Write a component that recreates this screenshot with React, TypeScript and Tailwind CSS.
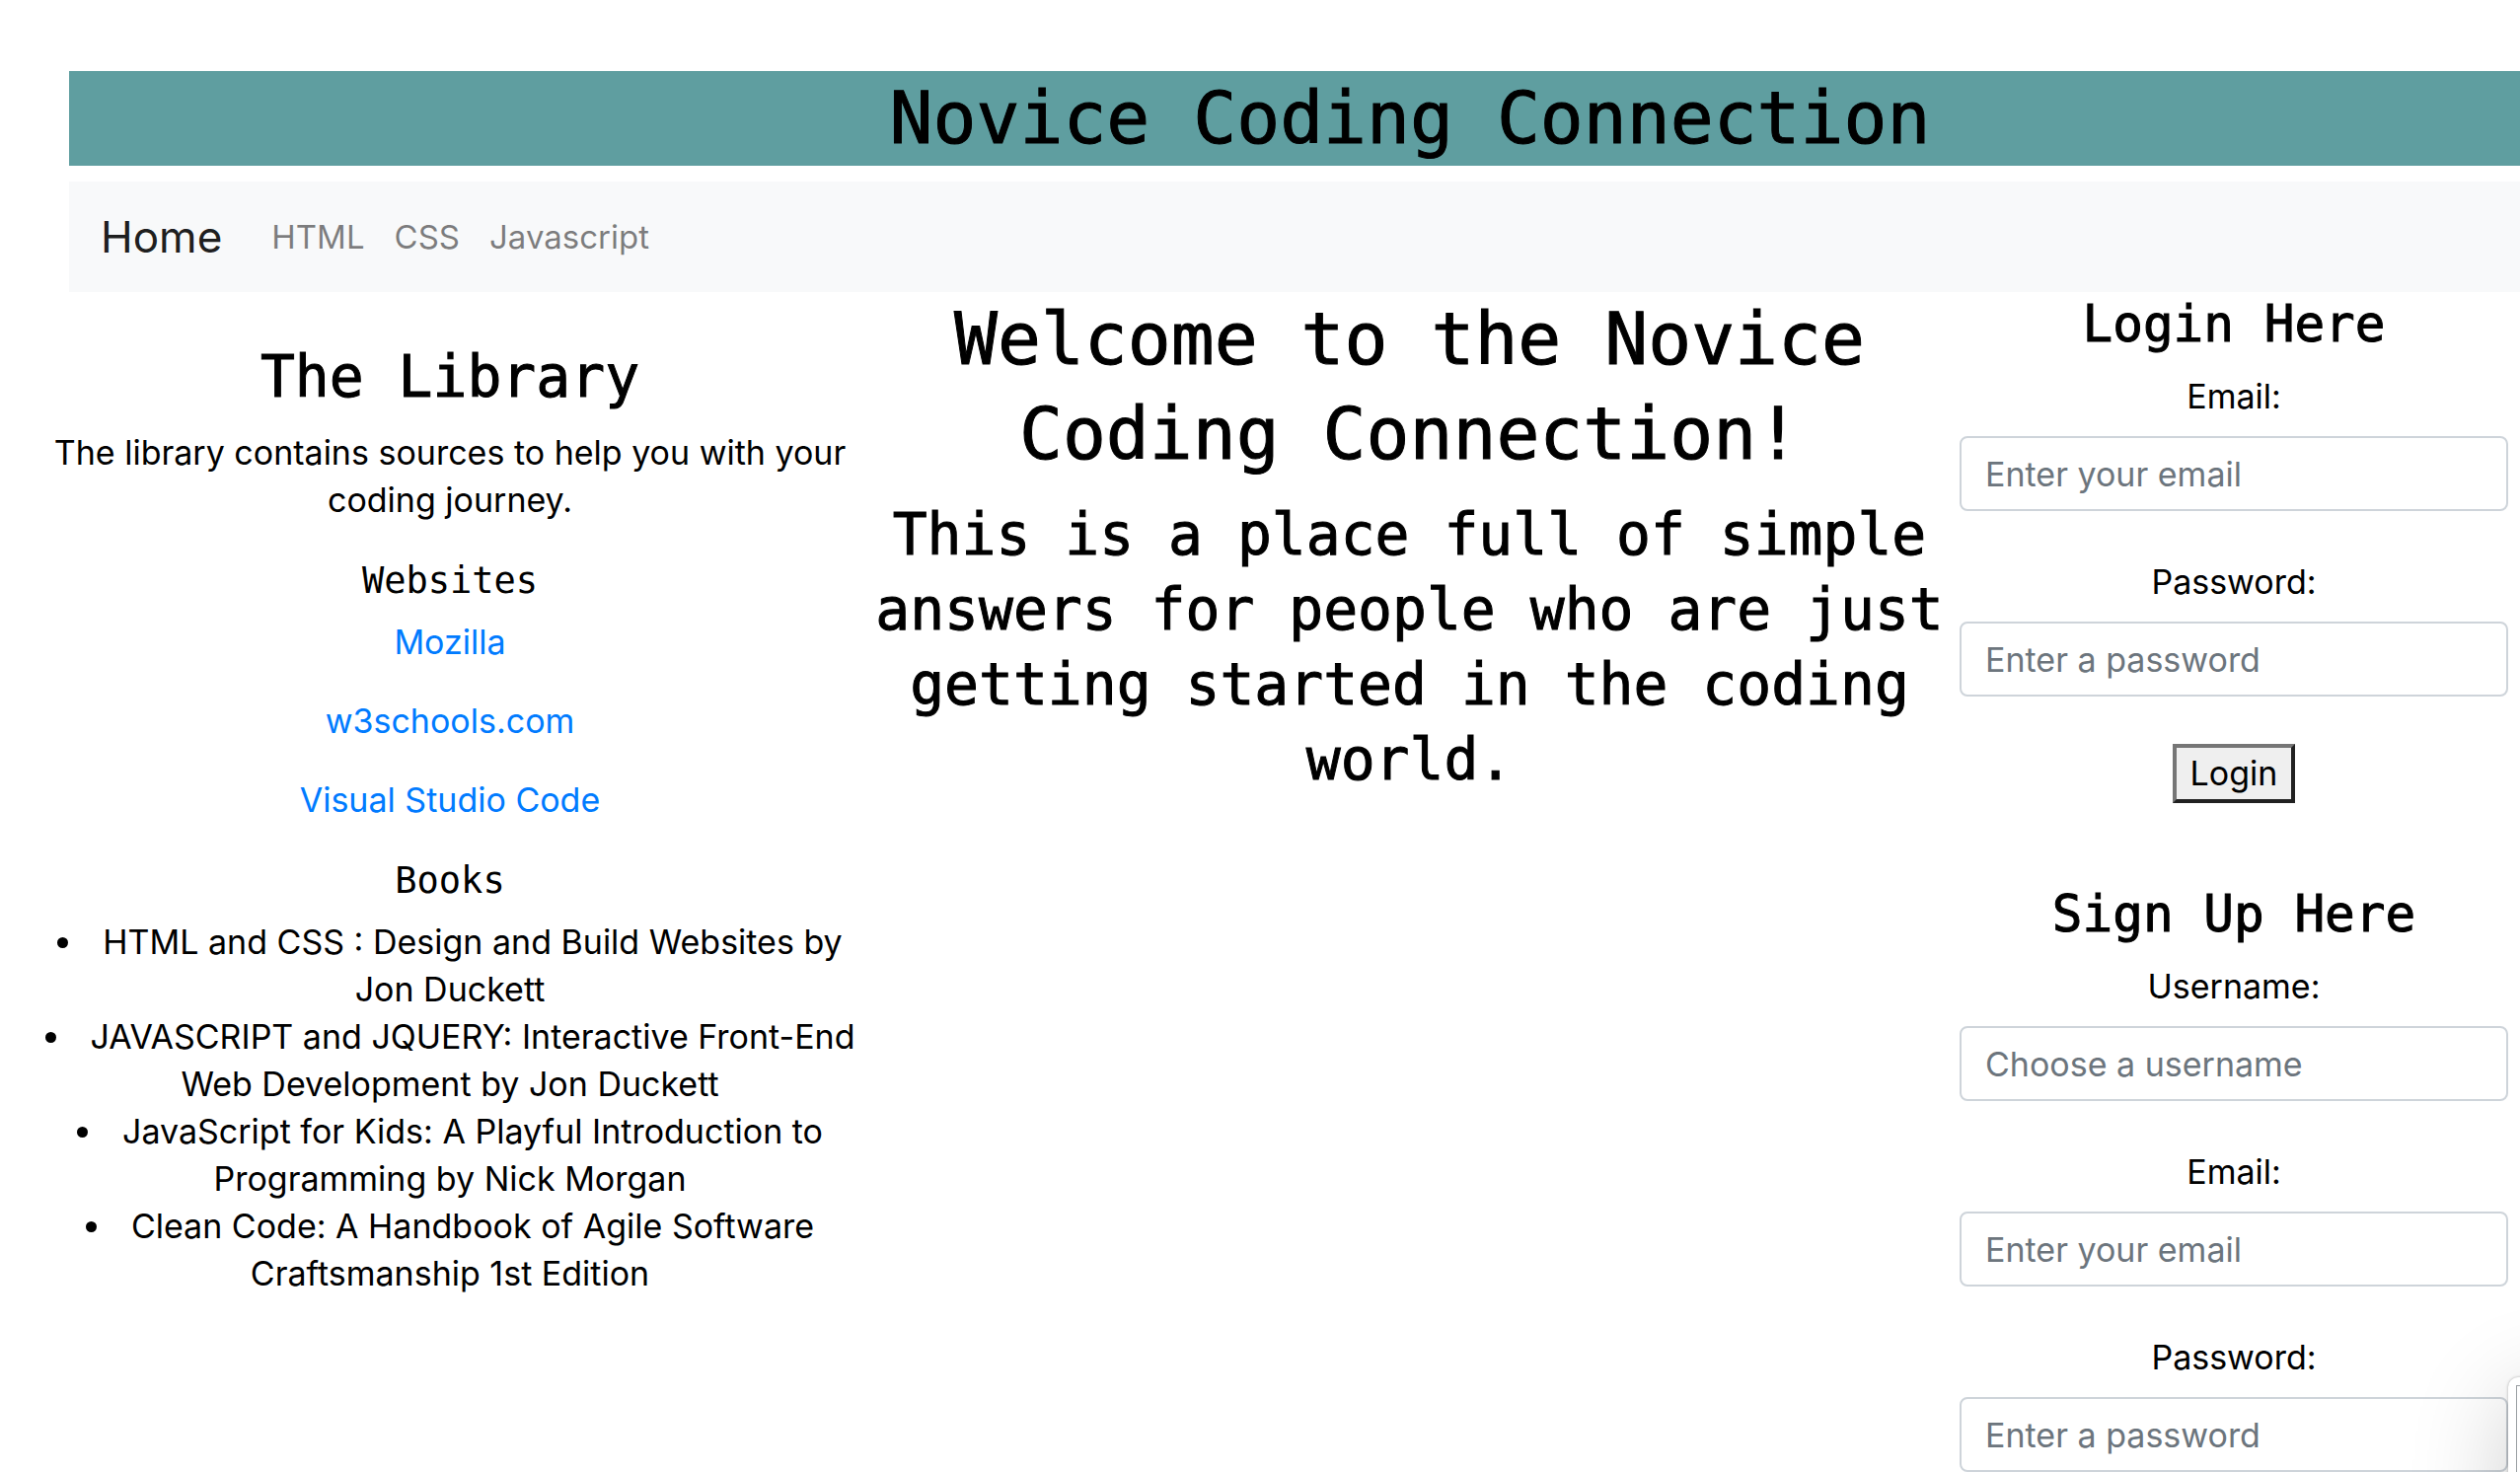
import type { ReactNode } from "react";

const thin = "font-['DejaVu_Sans_Mono',monospace] font-normal text-black";
const mono = "font-['DejaVu_Sans_Mono',monospace] font-normal text-black [-webkit-text-stroke:1px_black]";

function Title({ children }: { children: ReactNode }) {
  return <h3 className={`${mono} mb-4 text-[51px] leading-[66px]`}>{children}</h3>;
}

function Field({ id, label, type, placeholder }: { id: string; label: string; type: string; placeholder: string }) {
  return (
    <div className="flex flex-col gap-4">
      <label htmlFor={id}>{label}</label>
      <input
        id={id}
        type={type}
        placeholder={placeholder}
        className="h-[76px] w-full rounded-lg border-2 border-[#ced4da] bg-white px-6 text-[#495057] placeholder:text-[#6c757d]"
      />
    </div>
  );
}

const sites = [
  { name: "Mozilla", href: "https://developer.mozilla.org" },
  { name: "w3schools.com", href: "https://www.w3schools.com" },
  { name: "Visual Studio Code", href: "https://code.visualstudio.com" },
];

const books = [
  ["HTML and CSS : Design and Build Websites by", "Jon Duckett"],
  ["JAVASCRIPT and JQUERY: Interactive Front-End", "Web Development by Jon Duckett"],
  ["JavaScript for Kids: A Playful Introduction to", "Programming by Nick Morgan"],
  ["Clean Code: A Handbook of Agile Software", "Craftsmanship 1st Edition"],
];

export default function App() {
  return (
    <div className="relative min-h-screen overflow-hidden bg-white pt-[72px] font-['Inter',sans-serif] text-[34px] leading-[48px] text-black">
      <header className="ml-[70px] bg-[#5f9ea0] pl-[234px] text-center">
        <h1 className={`${mono} text-[73px] leading-[96px]`}>Novice Coding Connection</h1>
      </header>

      <nav className="mt-4 ml-[70px] flex h-28 items-center gap-[30px] bg-[#f8f9fa] px-8 text-[33px] text-black/50">
        <a href="#home" className="mr-5 text-[44px] text-black/90">Home</a>
        <a href="#html">HTML</a>
        <a href="#css">CSS</a>
        <a href="#javascript">Javascript</a>
      </nav>

      <main className="grid grid-cols-[830fr_1115fr_556fr] pr-3 pl-[41px] text-center">
        <section className="pt-12">
          <h2 className={`${mono} mb-[14px] text-[58px] leading-[77px]`}>The Library</h2>
          <p className="mb-[34px]">
            The library contains sources to help you with your
            <br />
            coding journey.
          </p>
          <h4 className={`${thin} mb-[14px] text-[37px] leading-[48px]`}>Websites</h4>
          <ul className="mb-[34px] flex flex-col gap-8">
            {sites.map((s) => (
              <li key={s.name}>
                <a href={s.href} className="text-[#007bff]">{s.name}</a>
              </li>
            ))}
          </ul>
          <h4 className={`${thin} mb-[14px] text-[37px] leading-[48px]`}>Books</h4>
          <ul className="list-inside list-disc whitespace-nowrap">
            {books.map(([first, second]) => (
              <li key={first}>
                {first}
                <br />
                {second}
              </li>
            ))}
          </ul>
        </section>

        <section>
          <h1 className={`${mono} mb-4 text-[73px] leading-[96px]`}>
            Welcome to the Novice
            <br />
            Coding Connection!
          </h1>
          <h2 className={`${mono} text-[58px] leading-[76px]`}>
            This is a place full of simple answers for people who are just getting started in the coding world.
          </h2>
        </section>

        <section>
          <form>
            <Title>Login Here</Title>
            <div className="flex flex-col gap-12">
              <Field id="login-email" label="Email:" type="email" placeholder="Enter your email" />
              <Field id="login-password" label="Password:" type="password" placeholder="Enter a password" />
              <button
                type="button"
                className="h-[60px] self-center border-4 border-t-[#767676] border-r-[#212121] border-b-[#212121] border-l-[#767676] bg-[#efefef] px-[14px] leading-[52px]"
              >
                Login
              </button>
            </div>
          </form>
          <form className="mt-20">
            <Title>Sign Up Here</Title>
            <div className="flex flex-col gap-12">
              <Field id="signup-username" label="Username:" type="text" placeholder="Choose a username" />
              <Field id="signup-email" label="Email:" type="email" placeholder="Enter your email" />
              <Field id="signup-password" label="Password:" type="password" placeholder="Enter a password" />
            </div>
          </form>
        </section>
      </main>

      <aside
        aria-hidden="true"
        className="absolute -right-[388px] -bottom-[304px] h-[400px] w-[400px] rounded-[10px] bg-white p-2 shadow-[0_20px_100px_rgba(0,0,0,0.2),0_0_3px_rgba(0,0,0,0.3)]"
      >
        <div className="h-full border border-[#9a9fa3]" />
      </aside>
    </div>
  );
}
